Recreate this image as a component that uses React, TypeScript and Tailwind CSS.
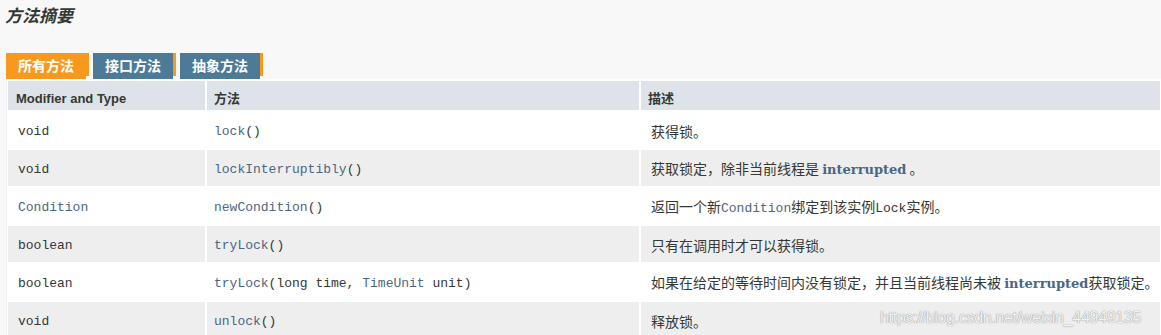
import type { ReactNode } from 'react';

const sans = "font-['Liberation_Sans','Noto_Sans_CJK_SC',sans-serif]";
const mono = "font-['Liberation_Mono','Noto_Sans_CJK_SC',monospace]";

type Row = {
  type: ReactNode;
  method: ReactNode;
  desc: ReactNode;
};

function Link({ children }: { children: ReactNode }) {
  return <span className="text-[#4a6782]">{children}</span>;
}

function Interrupted() {
  return (
    <span className="font-['DejaVu_Serif',serif] font-bold text-[13px] text-[#4a6782]">interrupted</span>
  );
}

const rows: Row[] = [
  {
    type: 'void',
    method: (
      <>
        <Link>lock</Link>()
      </>
    ),
    desc: '获得锁。',
  },
  {
    type: 'void',
    method: (
      <>
        <Link>lockInterruptibly</Link>()
      </>
    ),
    desc: (
      <>
        获取锁定，除非当前线程是 <Interrupted /> 。
      </>
    ),
  },
  {
    type: <Link>Condition</Link>,
    method: (
      <>
        <Link>newCondition</Link>()
      </>
    ),
    desc: (
      <>
        返回一个新<span className={`${mono} text-[13px] text-[#4a6782]`}>Condition</span>绑定到该实例
        <span className={`${mono} text-[13px]`}>Lock</span>实例。
      </>
    ),
  },
  {
    type: 'boolean',
    method: (
      <>
        <Link>tryLock</Link>()
      </>
    ),
    desc: '只有在调用时才可以获得锁。',
  },
  {
    type: 'boolean',
    method: (
      <>
        <Link>tryLock</Link>(long time, <Link>TimeUnit</Link> unit)
      </>
    ),
    desc: (
      <>
        如果在给定的等待时间内没有锁定，并且当前线程尚未被 <Interrupted />获取锁定。
      </>
    ),
  },
  {
    type: 'void',
    method: (
      <>
        <Link>unlock</Link>()
      </>
    ),
    desc: '释放锁。',
  },
];

function Tab({ label, active }: { label: string; active?: boolean }) {
  return (
    <div className="flex items-start">
      <div
        className={`h-[26px] px-[12px] flex items-center text-white font-bold text-[14px] ${sans} ${
          active ? 'bg-[#f8981d]' : 'bg-[#4d7a97]'
        }`}
      >
        {label}
      </div>
      <div className="w-[3px] h-[23px] bg-[#f8981d]" />
    </div>
  );
}

export default function App() {
  return (
    <div className={`relative w-[1161px] h-[335px] overflow-hidden bg-[#f8f8f8] text-[#353833] ${sans}`}>
      <h2 className="pl-[5px] pt-[6px] h-[53px] text-[17px] leading-[22px] font-bold italic">方法摘要</h2>

      <div className="flex gap-[4px] pl-[6px]">
        <Tab label="所有方法" active />
        <Tab label="接口方法" />
        <Tab label="抽象方法" />
      </div>

      <div className="ml-[6px] border-l border-[#eeeeee] bg-white pl-[1px] pr-[1px] pt-[2px]">
        <div className="grid grid-cols-[197px_432px_1fr] gap-[2px]">
          <div className="bg-[#dee3e9] h-[29px] pl-[8px] pt-[10px] text-[13px] leading-[16px] font-bold">
            Modifier and Type
          </div>
          <div className="bg-[#dee3e9] h-[29px] pl-[7px] pt-[10px] text-[13px] leading-[16px] font-bold">方法</div>
          <div className="bg-[#dee3e9] h-[29px] pl-[7px] pt-[10px] text-[13px] leading-[16px] font-bold">描述</div>

          {rows.map((r, i) => {
            const bg = i % 2 === 0 ? 'bg-white' : 'bg-[#eeeeee]';
            return [
              <div key={`t${i}`} className={`${bg} h-[36px] pl-[10px] pt-[3px] flex items-center ${mono} text-[13px] whitespace-pre`}>
                {r.type}
              </div>,
              <div key={`m${i}`} className={`${bg} h-[36px] pl-[7px] pt-[3px] flex items-center ${mono} text-[13px] whitespace-pre`}>
                <span>{r.method}</span>
              </div>,
              <div key={`d${i}`} className={`${bg} h-[36px] pl-[10px] pt-[2px] flex items-center text-[14px] whitespace-nowrap font-['Noto_Sans_CJK_SC',sans-serif]`}>
                <span>{r.desc}</span>
              </div>,
            ];
          })}
        </div>
      </div>

      <div className="absolute left-[880px] top-[306px] text-[16px] tracking-[-0.3px] font-['Liberation_Sans',sans-serif] text-[#f2f2f2] [text-shadow:0_0_1px_#9a9a9a,0_0_1px_#9a9a9a]">
        https://blog.csdn.net/weixin_44949135
      </div>
    </div>
  );
}
